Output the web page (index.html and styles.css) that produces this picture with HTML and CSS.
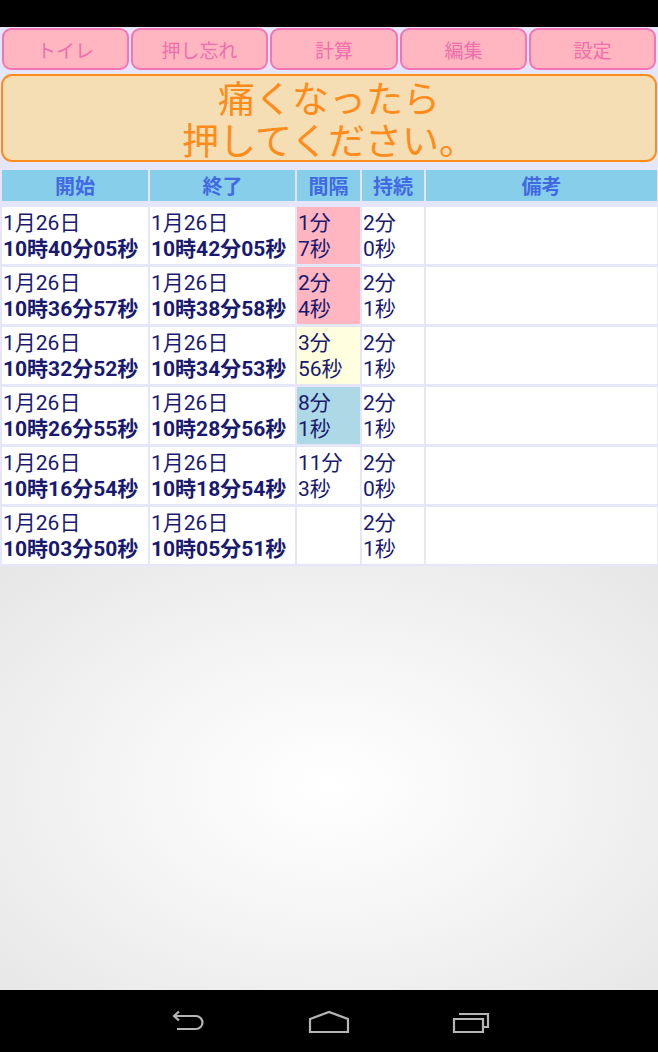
FILE: index.html
```html
<!DOCTYPE html>
<html lang="ja">
<head>
    <meta charset="UTF-8">
    <meta name="viewport" content="width=device-width, initial-scale=1.0">
    <title>陣痛記録</title>
    <link rel="stylesheet" href="styles.css">
</head>
<body>

    <div class="statusbar"></div>

    <div class="app">
        <div class="tabs">
            <button class="tab">トイレ</button>
            <button class="tab">押し忘れ</button>
            <button class="tab">計算</button>
            <button class="tab">編集</button>
            <button class="tab">設定</button>
        </div>

        <button class="notice">痛くなったら<br>押してください。</button>

        <div class="log">
            <div class="head">開始</div>
            <div class="head">終了</div>
            <div class="head">間隔</div>
            <div class="head">持続</div>
            <div class="head">備考</div>

            <div class="cell">1月26日<br><b>10時40分05秒</b></div>
            <div class="cell">1月26日<br><b>10時42分05秒</b></div>
            <div class="cell short">1分<br>7秒</div>
            <div class="cell">2分<br>0秒</div>
            <div class="cell"></div>

            <div class="cell">1月26日<br><b>10時36分57秒</b></div>
            <div class="cell">1月26日<br><b>10時38分58秒</b></div>
            <div class="cell short">2分<br>4秒</div>
            <div class="cell">2分<br>1秒</div>
            <div class="cell"></div>

            <div class="cell">1月26日<br><b>10時32分52秒</b></div>
            <div class="cell">1月26日<br><b>10時34分53秒</b></div>
            <div class="cell mid">3分<br>56秒</div>
            <div class="cell">2分<br>1秒</div>
            <div class="cell"></div>

            <div class="cell">1月26日<br><b>10時26分55秒</b></div>
            <div class="cell">1月26日<br><b>10時28分56秒</b></div>
            <div class="cell long">8分<br>1秒</div>
            <div class="cell">2分<br>1秒</div>
            <div class="cell"></div>

            <div class="cell">1月26日<br><b>10時16分54秒</b></div>
            <div class="cell">1月26日<br><b>10時18分54秒</b></div>
            <div class="cell">11分<br>3秒</div>
            <div class="cell">2分<br>0秒</div>
            <div class="cell"></div>

            <div class="cell">1月26日<br><b>10時03分50秒</b></div>
            <div class="cell">1月26日<br><b>10時05分51秒</b></div>
            <div class="cell"></div>
            <div class="cell">2分<br>1秒</div>
            <div class="cell"></div>
        </div>

        <div class="empty"></div>
    </div>

    <div class="navbar">
        <svg class="nav-icon" width="40" height="24" viewBox="0 0 40 24">
            <path d="M6 6 H28 a6.5 6.5 0 0 1 0 13 H9 M11 1.5 L6 6 L11 10.5" />
        </svg>
        <svg class="nav-icon" width="42" height="24" viewBox="0 0 42 24">
            <path d="M2 9 L21 2 L40 9 V22 H2 Z" />
        </svg>
        <svg class="nav-icon" width="40" height="24" viewBox="0 0 40 24">
            <path d="M4 9 H33 V22 H4 Z M9 4 H38 V17 H33" />
        </svg>
    </div>

</body>
</html>
```

FILE: styles.css
```css
body {
    margin: 0;
    width: 658px;
    height: 1052px;
    display: flex;
    flex-direction: column;
    background: #000;
    font-family: Roboto, "Noto Sans CJK JP", sans-serif;
    overflow: hidden;
}
.statusbar {
    height: 27px;
    background: #000;
}
.app {
    flex: 1;
    display: flex;
    flex-direction: column;
    background: #e6e6fa;
}
.tabs {
    display: grid;
    grid-template-columns: 127px 137px 128px 127px 127px;
    gap: 2px;
    padding: 1px 1px 0 2px;
}
.tab {
    height: 42px;
    margin: 0;
    background: #ffb6c1;
    border: 2px solid #f574b8;
    border-radius: 9px;
    color: #f06eab;
    font-family: "Noto Sans CJK JP", sans-serif;
    font-size: 19px;
    padding: 0;
}
.notice {
    margin: 4px 1px 0 1px;
    height: 88px;
    padding: 0;
    background: #f5deb3;
    border: 2px solid #ff8c1a;
    border-radius: 11px;
    color: #ff8c1a;
    font-family: "Noto Sans CJK JP", sans-serif;
    font-size: 37px;
    line-height: 42px;
}
.log {
    display: grid;
    grid-template-columns: 146px 145px 63px 62px 1fr;
    grid-template-rows: 34px repeat(6, 57px);
    column-gap: 2px;
    row-gap: 3px;
    margin-top: 8px;
    padding: 0 1px 2px 2px;
}
.head {
    background: #87ceeb;
    color: #4169e1;
    font-family: "Noto Sans CJK JP", sans-serif;
    font-weight: bold;
    font-size: 20px;
    line-height: 31px;
    text-align: center;
    margin-bottom: 3px;
}
.cell {
    background: #fff;
    color: #191970;
    font-size: 21px;
    line-height: 26px;
    padding: 3px 0 0 1px;
    white-space: nowrap;
}
.cell b {
    font-weight: bold;
}
.short {
    background: #ffb6c1;
}
.mid {
    background: #ffffe0;
}
.long {
    background: #add8e6;
}
.empty {
    flex: 1;
    background: radial-gradient(ellipse at 50% 52%, #ffffff 0%, #f6f6f6 40%, #e6e6e6 100%);
}
.navbar {
    height: 62px;
    flex-shrink: 0;
    background: #000;
    display: flex;
    justify-content: center;
    align-items: center;
    gap: 100px;
    padding-top: 2px;
    box-sizing: border-box;
}
.nav-icon path {
    fill: none;
    stroke: #b5b5b5;
    stroke-width: 2.2;
    stroke-linejoin: miter;
}
```
